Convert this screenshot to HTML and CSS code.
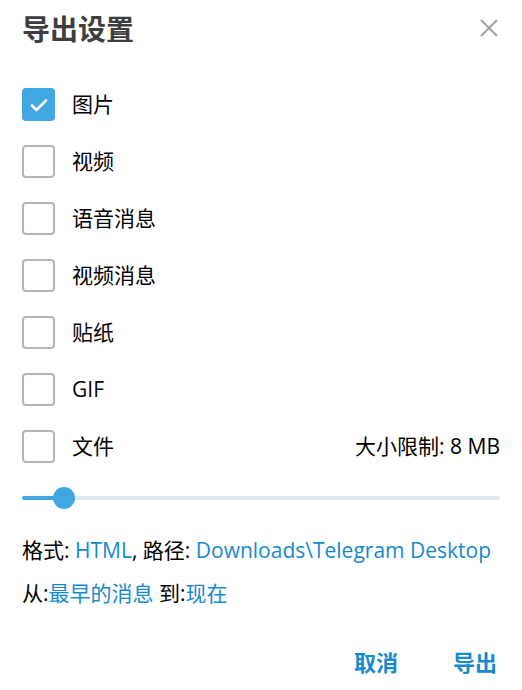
FILE: index.html
```html
<!DOCTYPE html>
<html lang="zh">
<head>
<meta charset="utf-8">
<link rel="stylesheet" href="styles.css">
</head>
<body>
<div class="dialog">
  <div class="header">
    <div class="title">导出设置</div>
    <svg class="close" width="18" height="18" viewBox="0 0 18 18"><path d="M1 1L17 17M17 1L1 17" stroke="#a3a3a3" stroke-width="2" fill="none"/></svg>
  </div>
  <div class="list">
    <div class="row"><span class="box checked"><svg width="18" height="14" viewBox="0 0 18 14"><path d="M2 7.5L6.5 12L16 2.5" stroke="#fff" stroke-width="2.6" fill="none" stroke-linecap="round" stroke-linejoin="round"/></svg></span><span class="label">图片</span></div>
    <div class="row"><span class="box"></span><span class="label">视频</span></div>
    <div class="row"><span class="box"></span><span class="label">语音消息</span></div>
    <div class="row"><span class="box"></span><span class="label">视频消息</span></div>
    <div class="row"><span class="box"></span><span class="label">贴纸</span></div>
    <div class="row"><span class="box"></span><span class="label">GIF</span></div>
    <div class="row"><span class="box"></span><span class="label">文件</span><span class="limit">大小限制: 8 MB</span></div>
  </div>
  <div class="slider">
    <div class="track"><div class="fill"></div></div>
    <div class="knob"></div>
  </div>
  <div class="info">
    <div class="line">格式: <span class="link">HTML</span>, 路径: <span class="link">Downloads\Telegram Desktop</span></div>
    <div class="line">从:<span class="link">最早的消息</span> 到:<span class="link">现在</span></div>
  </div>
  <div class="buttons">
    <span class="btn">取消</span>
    <span class="btn">导出</span>
  </div>
</div>
</body>
</html>
```
FILE: styles.css
```css
html, body {
  margin: 0;
  padding: 0;
  background: #fff;
}
body {
  font-family: "Open Sans", "Noto Sans CJK SC", sans-serif;
  color: #000;
}
.dialog {
  width: 522px;
  height: 690px;
  box-sizing: border-box;
  padding: 0 22px 0 22px;
}
.header {
  height: 60px;
  display: flex;
  align-items: center;
  justify-content: space-between;
}
.title {
  font-size: 28px;
  font-weight: 600;
  color: #3e3e3e;
  line-height: 1;
  margin-top: -3px;
}
.close {
  margin-right: 2px;
  margin-top: -4px;
}
.list {
  margin-top: 28px;
  display: flex;
  flex-direction: column;
  gap: 24px;
}
.row {
  height: 33px;
  display: flex;
  align-items: center;
}
.box {
  width: 33px;
  height: 33px;
  box-sizing: border-box;
  border: 2.5px solid #b5b5b5;
  border-radius: 4px;
  display: flex;
  align-items: center;
  justify-content: center;
  flex: none;
}
.box.checked {
  background: #40a7e3;
  border-color: #40a7e3;
}
.label {
  margin-left: 17px;
  font-size: 21px;
  line-height: 1;
}
.limit {
  margin-left: auto;
  font-size: 21px;
  line-height: 1;
}
.slider {
  margin-top: 24px;
  height: 22px;
  position: relative;
  display: flex;
  align-items: center;
}
.track {
  width: 100%;
  height: 4px;
  border-radius: 2px;
  background: #e1e9f0;
}
.fill {
  width: 42px;
  height: 4px;
  border-radius: 2px;
  background: #40a7e3;
}
.knob {
  position: absolute;
  left: 31px;
  top: 0;
  width: 22px;
  height: 22px;
  border-radius: 50%;
  background: #40a7e3;
}
.info {
  margin-top: 26px;
  display: flex;
  flex-direction: column;
  gap: 13px;
}
.line {
  font-size: 21px;
  line-height: 30px;
  white-space: nowrap;
}
.link {
  color: #168acd;
}
.buttons {
  margin-top: 39px;
  display: flex;
  justify-content: flex-end;
  gap: 55px;
  padding-right: 3px;
}
.btn {
  font-size: 22px;
  font-weight: 700;
  color: #168acd;
  line-height: 30px;
}
```
